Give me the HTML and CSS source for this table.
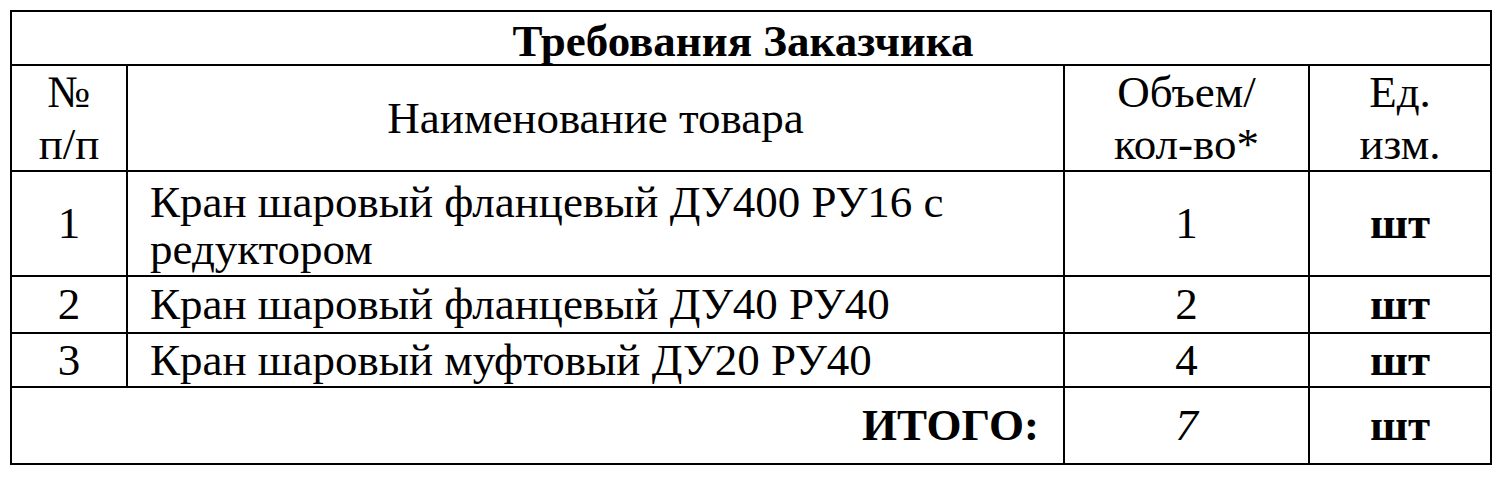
FILE: index.html
```html
<!DOCTYPE html>
<html lang="ru">
<head>
<meta charset="utf-8">
<title>Требования Заказчика</title>
<link rel="stylesheet" href="styles.css">
</head>
<body>
<div class="sheet">
  <div class="cell title span4"><span class="txt">Требования Заказчика</span></div>

  <div class="cell head"><span class="txt">№<br>п/п</span></div>
  <div class="cell head"><span class="txt">Наименование товара</span></div>
  <div class="cell head"><span class="txt">Объем/<br>кол-во*</span></div>
  <div class="cell head"><span class="txt">Ед.<br>изм.</span></div>

  <div class="cell"><span class="txt">1</span></div>
  <div class="cell name two"><span class="txt">Кран шаровый фланцевый ДУ400 РУ16 с<br>редуктором</span></div>
  <div class="cell"><span class="txt">1</span></div>
  <div class="cell bold"><span class="txt">шт</span></div>

  <div class="cell"><span class="txt">2</span></div>
  <div class="cell name"><span class="txt">Кран шаровый фланцевый ДУ40 РУ40</span></div>
  <div class="cell"><span class="txt">2</span></div>
  <div class="cell bold"><span class="txt">шт</span></div>

  <div class="cell"><span class="txt">3</span></div>
  <div class="cell name"><span class="txt">Кран шаровый муфтовый ДУ20 РУ40</span></div>
  <div class="cell"><span class="txt">4</span></div>
  <div class="cell bold"><span class="txt">шт</span></div>

  <div class="cell total-label span2"><span class="txt">ИТОГО:</span></div>
  <div class="cell italic"><span class="txt">7</span></div>
  <div class="cell bold"><span class="txt">шт</span></div>
</div>
</body>
</html>
```
FILE: styles.css
```css
body {
  margin: 0;
  padding: 10px;
  font-family: "Times New Roman", "Liberation Serif", Tinos, serif;
}

.sheet {
  display: grid;
  grid-template-columns: 116px 937px 245px 182px;
  grid-template-rows: 54px 106px 105px 57px 54px 77px;
  width: 1482px;
  box-sizing: border-box;
  border-left: 2px solid #000;
  border-top: 2px solid #000;
}

.cell {
  box-sizing: border-box;
  border-right: 2px solid #000;
  border-bottom: 2px solid #000;
  display: flex;
  align-items: center;
  justify-content: center;
  text-align: center;
}

.txt {
  display: block;
  font-family: "Times New Roman", "Liberation Serif", Tinos, serif;
  font-size: 45px;
  line-height: 47px;
}

.span4 {
  grid-column: span 4;
}

.span2 {
  grid-column: span 2;
}

.title {
  font-weight: bold;
  padding: 6px 16px 0 0;
}

.head .txt {
  line-height: 52px;
}

.name {
  justify-content: flex-start;
  text-align: left;
  padding-left: 22px;
}

.two {
  padding-top: 4px;
}

.bold {
  font-weight: bold;
}

.italic {
  font-style: italic;
}

.total-label {
  justify-content: flex-end;
  text-align: right;
  font-weight: bold;
  padding-right: 24px;
}
```
